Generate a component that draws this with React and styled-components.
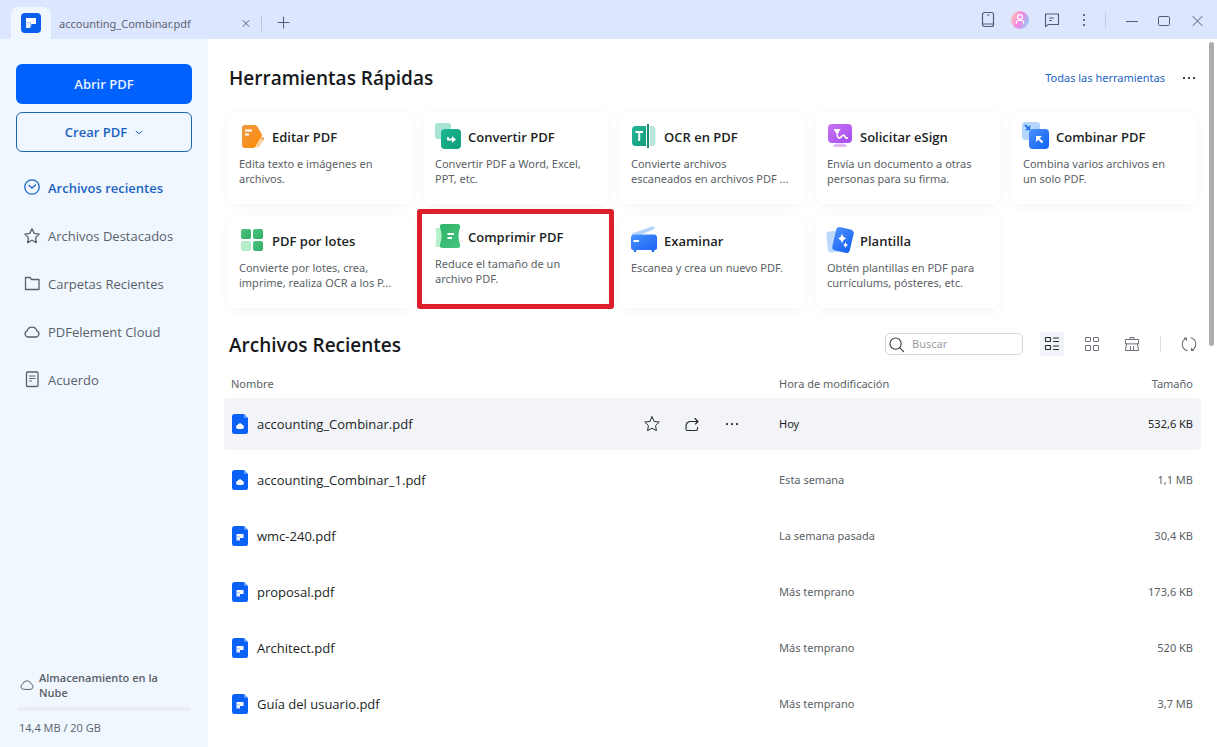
import styled, { createGlobalStyle, css } from 'styled-components';

const GlobalStyle = createGlobalStyle`
	* {
		box-sizing: border-box;
	}
	body {
		margin: 0;
		font-family: 'Noto Sans', 'Open Sans', sans-serif;
		font-size: 11px;
		color: #1c1f24;
		background-color: #fff;
	}
	h1, h2, h3, p, ul {
		margin: 0;
		padding: 0;
	}
	button {
		font-family: inherit;
		padding: 0;
		border: none;
		background: none;
		cursor: pointer;
	}
	svg {
		display: block;
		overflow: visible;
		flex: none;
	}
`;

const titleFont = "'Open Sans', 'Noto Sans', sans-serif";

const Page = styled.div`
	height: 100vh;
	display: flex;
	flex-direction: column;
	overflow: hidden;
`;

const TitleBar = styled.header`
	height: 39px;
	flex: none;
	display: flex;
	align-items: flex-end;
	padding: 0 3px 0 11px;
	background-color: #dce6fe;
`;

const HomeTab = styled.button`
	width: 40px;
	height: 32px;
	display: grid;
	place-items: center;
	background-color: #f0f7ff;
	border-radius: 8px 8px 0 0;
`;

const FileTab = styled.div`
	width: 210px;
	height: 32px;
	display: flex;
	align-items: center;
	justify-content: space-between;
	padding: 0 3px 0 8px;
	color: #5d6470;
`;

const IconButton = styled.button`
	width: ${({ $size }) => $size || '24px'};
	height: ${({ $height }) => $height || '24px'};
	display: grid;
	place-items: center;
	color: ${({ $color }) => $color || '#565d6b'};
	background-color: ${({ $active }) => ($active ? '#f1f3f8' : 'transparent')};
	border-radius: 4px;
`;

const TabDivider = styled.span`
	width: 1px;
	height: 16px;
	margin: 0 10px 8px 0;
	background-color: #bcc6dd;
`;

const WindowControls = styled.div`
	height: 39px;
	margin-left: auto;
	display: flex;
	align-items: center;
`;

const Divider = styled.span`
	width: 1px;
	height: 16px;
	background-color: ${({ $color }) => $color || '#d9dce2'};
	margin: ${({ $margin }) => $margin || '0'};
`;

const Body = styled.div`
	flex: 1;
	min-height: 0;
	display: flex;
`;

const Sidebar = styled.aside`
	width: 208px;
	flex: none;
	display: flex;
	flex-direction: column;
	padding: 25px 16px 11px;
	background-color: #f0f7ff;
	font-family: ${titleFont};
`;

const MainButton = styled.button`
	height: 40px;
	flex: none;
	margin-bottom: 8px;
	display: flex;
	align-items: center;
	justify-content: center;
	gap: 8px;
	border-radius: 6px;
	font-size: 13px;
	font-weight: 600;
	${({ $outline }) =>
		$outline
			? css`
					color: #1b63c2;
					border: 1px solid #2465b0;
			  `
			: css`
					color: #e8f1ff;
					background-color: #0061ff;
			  `}
`;

const Nav = styled.nav`
	display: flex;
	flex-direction: column;
	margin-top: 4px;
`;

const NavLink = styled.a`
	height: 48px;
	display: flex;
	align-items: center;
	gap: 8px;
	padding-left: 8px;
	font-size: 13px;
	font-weight: ${({ $active }) => ($active ? 600 : 400)};
	color: ${({ $active }) => ($active ? '#1b63c2' : '#5b616b')};
	text-decoration: none;
`;

const Storage = styled.div`
	margin-top: auto;
	color: #5b616b;
`;

const StorageTitle = styled.div`
	display: flex;
	align-items: center;
	gap: 5px;
	padding: 0 24px 0 4px;
	font-weight: 600;
	font-size: 11px;
	line-height: 15px;
`;

const StorageBar = styled.div`
	height: 4px;
	margin: 7px 1px 9px;
	border-radius: 2px;
	background-color: #ebedf0;
`;

const StorageText = styled.p`
	padding-left: 3px;
	font-size: 11px;
	line-height: 16px;
`;

const Main = styled.main`
	flex: 1;
	min-width: 0;
	position: relative;
	padding: 19px 16px 0;
	overflow: hidden;
`;

const ScrollThumb = styled.div`
	position: absolute;
	top: 3px;
	right: 3px;
	width: 5px;
	height: 43%;
	border-radius: 3px;
	background-color: #adadad;
`;

const SectionHeader = styled.div`
	height: ${({ $height }) => $height};
	margin-bottom: 14px;
	padding-left: 5px;
	display: flex;
	align-items: center;
	justify-content: space-between;
`;

const SectionTitle = styled.h2`
	padding-top: ${({ $drop }) => ($drop ? '2px' : '0')};
	font-family: ${titleFont};
	font-size: 19px;
	line-height: 24px;
	font-weight: 600;
	color: #16181c;
`;

const HeaderLinks = styled.div`
	display: flex;
	align-items: center;
	gap: 12px;
`;

const AllTools = styled.a`
	padding-bottom: 2px;
	color: #1b63c2;
	text-decoration: none;
`;

const ToolGrid = styled.div`
	display: grid;
	grid-template-columns: repeat(5, minmax(0, 1fr));
	gap: 12px;
	padding: 0 5px 0 4px;
	margin-bottom: 24px;
`;

const ToolCard = styled.article`
	position: relative;
	height: 92px;
	padding: 12px 8px 0 11px;
	border-radius: 8px;
	background-color: #fff;
	box-shadow: 0 2px 10px rgba(40, 100, 170, 0.07);
	${({ $raised }) =>
		$raised &&
		css`
			transform: translateY(-4px);
			&::after {
				content: '';
				position: absolute;
				inset: -3px -6px -5px -7px;
				border: 5px solid #dc1f2b;
				border-radius: 3px;
			}
		`}
`;

const ToolHead = styled.div`
	height: 24px;
	display: flex;
	align-items: center;
	gap: 8px;
	padding-left: 1px;
	margin-bottom: 8px;
`;

const ToolName = styled.h3`
	padding-top: 2px;
	font-family: ${titleFont};
	font-size: 13px;
	line-height: 24px;
	font-weight: 600;
	color: #1c1f24;
`;

const ToolText = styled.p`
	line-height: 15px;
	color: #5b5f66;
	white-space: pre;
`;

const ListTools = styled.div`
	display: flex;
	align-items: center;
	gap: 16px;
`;

const SearchBox = styled.label`
	width: 138px;
	height: 22px;
	margin-right: 1px;
	display: flex;
	align-items: center;
	gap: 8px;
	padding: 0 3px;
	border: 1px solid #d4d7dd;
	border-radius: 5px;
	color: #3a3d43;
`;

const SearchInput = styled.input`
	width: 100%;
	min-width: 0;
	padding: 0 0 2px;
	border: none;
	outline: none;
	background: none;
	font-family: inherit;
	font-size: 11px;
	&::placeholder {
		color: #9b9ea4;
	}
`;

const FileTable = styled.table`
	width: 100%;
	table-layout: fixed;
	border-collapse: separate;
	border-spacing: 0 4px;
`;

const HeadCell = styled.th`
	height: 20px;
	width: ${({ $width }) => $width || 'auto'};
	padding: 0 8px 0 ${({ $first }) => ($first ? '7px' : '8px')};
	text-align: ${({ $align }) => $align || 'left'};
	line-height: 20px;
	font-weight: 400;
	color: #5b5f66;
`;

const Cell = styled.td`
	height: 52px;
	padding: 0 8px 2px;
	text-align: ${({ $align }) => $align || 'left'};
	&:first-child {
		padding-bottom: 0;
		border-radius: 4px 0 0 4px;
	}
	&:last-child {
		border-radius: 0 4px 4px 0;
	}
`;

const FileRow = styled.tr`
	color: ${({ $active }) => ($active ? '#1c1f24' : '#5b5f66')};
	& > td {
		background-color: ${({ $active }) => ($active ? '#f2f4f8' : 'transparent')};
	}
`;

const FileName = styled.div`
	display: flex;
	align-items: center;
	gap: 9px;
	font-family: ${titleFont};
	font-size: 13px;
	color: #1c1f24;
`;

const RowActions = styled.div`
	display: flex;
	gap: 16px;
	margin: 0 19px 0 auto;
`;

const stroke = { fill: 'none', stroke: 'currentColor', strokeLinecap: 'round', strokeLinejoin: 'round' };

const Svg = ({ size = 16, width = 1.2, children }) => (
	<svg width={size} height={size} viewBox="0 0 16 16" {...stroke} strokeWidth={width} aria-hidden="true">
		{children}
	</svg>
);

const starPath = 'M8 .8l2.2 4.6 5 .7-3.6 3.5.8 5L8 12.2l-4.4 2.4.8-5L.8 6.100l5-.7z';
const cloudPath = 'M4 13a3.2 3.2 0 0 1-.8-6.200 5 5 0 0 1 9.600 0A3.200 3.200 0 0 1 12 13z';

const Dots = ({ vertical, r = 1 }) => (
	<svg width="16" height="16" viewBox="0 0 16 16" fill="currentColor" aria-hidden="true">
		{[3, 8, 13].map((p) => (
			<rect key={p} x={(vertical ? 8 : p) - r} y={(vertical ? p : 8) - r} width={r * 2} height={r * 2} rx=".4" />
		))}
	</svg>
);

const Gradient = ({ id, from, to }) => (
	<linearGradient id={id} x1="0" y1="0" x2="1" y2="1">
		<stop offset="0" stopColor={from} />
		<stop offset="1" stopColor={to} />
	</linearGradient>
);

const ToolIcon = ({ id, from, to, children }) => (
	<svg width="24" height="24" viewBox="0 0 24 24" aria-hidden="true">
		<defs>
			<Gradient id={id} from={from} to={to} />
		</defs>
		{children}
	</svg>
);

const tools = [
	{
		name: 'Editar PDF',
		text: 'Edita texto e imágenes en\narchivos.',
		icon: (
			<ToolIcon id="edit" from="#ee9a45" to="#ff8a00">
				<path d="M5 1h9.500q2 0 3 1.700l4 7q.7 1.300 0 2.600L16 22q-1 2-3 2H5q-3 0-3-3V4q0-3 3-3z" fill="url(#edit)" />
				<path d="M21.500 12.500l3 1.800-4.800 8.200-3.300 1.700.2-3.600z" fill="#fbd3a3" />
				<path d="M21.500 12.500l3 1.800-1.200 2-3-1.800z" fill="#f4a85a" />
				<path d="M5 6.500h7M5 10.500h4" stroke="#fff" strokeWidth="1.8" />
			</ToolIcon>
		),
	},
	{
		name: 'Convertir PDF',
		text: 'Convertir PDF a Word, Excel,\nPPT, etc.',
		icon: (
			<ToolIcon id="convert" from="#1fb893" to="#0c9c78">
				<rect x="-1" y="-1" width="16" height="16" rx="3" fill="#a6e3d2" />
				<rect x="5" y="5" width="20" height="20" rx="4" fill="url(#convert)" />
				<path d="M12 13v2.500h5" fill="none" stroke="#fff" strokeWidth="1.8" />
				<path d="M16 12l4 3.500-4 3.500z" fill="#fff" />
			</ToolIcon>
		),
	},
	{
		name: 'OCR en PDF',
		text: 'Convierte archivos\nescaneados en archivos PDF ...',
		icon: (
			<ToolIcon id="ocr" from="#27b797" to="#0f9d7c">
				<path d="M3.500 2H14v20H3.500Q0 22 0 18.500V5.500Q0 2 3.500 2z" fill="url(#ocr)" />
				<rect x="15" y="0" width="2" height="24" fill="#0f8f72" />
				<path d="M18 2h2q3.500 0 3.500 3.500v13Q23.500 22 20 22h-2z" fill="#b9e8db" />
				<path d="M3.500 8h7.500M7.200 8v9" stroke="#fff" strokeWidth="2" />
			</ToolIcon>
		),
	},
	{
		name: 'Solicitar eSign',
		text: 'Envía un documento a otras\npersonas para su firma.',
		icon: (
			<ToolIcon id="esign" from="#c473f3" to="#a64df0">
				<path d="M5 23q1-3.500 4-3.500h6q3 0 4 3.500z" fill="#dfbcf8" />
				<rect x="0" y="0" width="24" height="19" rx="4" fill="url(#esign)" />
				<path d="M5.500 5h7l-3.300 6z" fill="#fff" />
				<path d="M9 10.500c.5 3.500 2.500 4.500 4 2.500s3-2.500 3.800-.5 1.500 2 3.200 1.500" fill="none" stroke="#fff" strokeWidth="1.7" />
			</ToolIcon>
		),
	},
	{
		name: 'Combinar PDF',
		text: 'Combina varios archivos en\nun solo PDF.',
		icon: (
			<ToolIcon id="combine" from="#4c90fb" to="#1062f5">
				<rect x="-2" y="-2" width="18" height="18" rx="3" fill="#b5d6fd" />
				<path d="M1 1l3.500 3.500" stroke="#2670e8" strokeWidth="1.8" />
				<path d="M6.200 1v5.200H1z" fill="#2670e8" />
				<rect x="5" y="5" width="20" height="20" rx="4" fill="url(#combine)" />
				<path d="M18.500 18.500l-5-5" stroke="#fff" strokeWidth="2" />
				<path d="M12 18v-6h6z" fill="#fff" />
			</ToolIcon>
		),
	},
	{
		name: 'PDF por lotes',
		text: 'Convierte por lotes, crea,\nimprime, realiza OCR a los P...',
		icon: (
			<ToolIcon id="batch" from="#4fc380" to="#2fae66">
				<rect x="1" y="1" width="10" height="10" rx="2" fill="url(#batch)" />
				<rect x="13" y="1" width="10" height="10" rx="2" fill="url(#batch)" />
				<rect x="1" y="13" width="10" height="10" rx="2" fill="#b6edc9" />
				<rect x="13" y="13" width="10" height="10" rx="2" fill="url(#batch)" />
			</ToolIcon>
		),
	},
	{
		name: 'Comprimir PDF',
		text: 'Reduce el tamaño de un\narchivo PDF.',
		raised: true,
		icon: (
			<ToolIcon id="compress" from="#2fb56a" to="#45c37c">
				<path d="M5 4H1Q-1 4-.6 6q1.800 6 0 15-.4 2 1.600 2H6z" fill="#b6f0cc" />
				<path d="M7 0h14q4 0 3 3.500-3 8.500 0 17 1 3.500-3 3.500H7q-4 0-3-3.500 3-8.500 0-17Q3 0 7 0z" fill="url(#compress)" />
				<path d="M11.500 10h6.500M11.500 14h4.500" stroke="#fff" strokeWidth="1.8" />
			</ToolIcon>
		),
	},
	{
		name: 'Examinar',
		text: 'Escanea y crea un nuevo PDF.',
		icon: (
			<ToolIcon id="scan" from="#4a92fd" to="#1763f5">
				<path d="M0 6.500v-1L20-1.500q2-.8 2.500.5t-1 2.500L9 6.500z" fill="#b3d2fb" />
				<path d="M2 6.500h20q3 0 3 3V20q0 2-2 2h-.5l-.5 2h-2l-.5-2H4.500L4 24H2l-.5-2Q-1 22-1 20V9.500q0-3 3-3z" fill="url(#scan)" />
				<path d="M1.500 13h5.500" stroke="#fff" strokeWidth="2" />
			</ToolIcon>
		),
	},
	{
		name: 'Plantilla',
		text: 'Obtén plantillas en PDF para\ncurrículums, pósteres, etc.',
		icon: (
			<ToolIcon id="template" from="#4a8ffb" to="#1260f5">
				<rect x="-1" y="3" width="16" height="21" rx="3" fill="#bddafc" transform="rotate(-6 7 13)" />
				<rect x="6" y="0" width="18" height="24" rx="4" fill="url(#template)" transform="rotate(13 15 12)" />
				<path d="M14 5.500q.8 4 4.500 5-3.700 1-4.500 5-.8-4-4-5 3.200-1 4-5z" fill="#fff" />
				<path d="M17.500 14q.5 2.500 2.500 3-2 .5-2.500 3-.5-2.500-2.500-3 2-.5 2.500-3z" fill="#fff" />
			</ToolIcon>
		),
	},
];

const navItems = [
	{
		label: 'Archivos recientes',
		active: true,
		icon: (
			<>
				<circle cx="8" cy="7" r="7.2" />
				<path d="M5 5.500l3 2.500 3.500-3" />
			</>
		),
	},
	{ label: 'Archivos Destacados', icon: <path d={starPath} /> },
	{ label: 'Carpetas Recientes', icon: <path d="M1.500 1.500H6L7.500 3.500H15V13.500H1.500z" /> },
	{ label: 'PDFelement Cloud', icon: <path d={cloudPath} /> },
	{
		label: 'Acuerdo',
		icon: (
			<>
				<rect x="2.5" y="0" width="11.5" height="14.5" rx="1" />
				<path d="M5.500 4h5.500M5.500 6.500h5.500M5.500 9h2" strokeWidth="1" />
			</>
		),
	},
];

const files = [
	{ name: 'accounting_Combinar.pdf', date: 'Hoy', size: '532,6 KB', cloud: true, active: true },
	{ name: 'accounting_Combinar_1.pdf', date: 'Esta semana', size: '1,1 MB', cloud: true },
	{ name: 'wmc-240.pdf', date: 'La semana pasada', size: '30,4 KB' },
	{ name: 'proposal.pdf', date: 'Más temprano', size: '173,6 KB' },
	{ name: 'Architect.pdf', date: 'Más temprano', size: '520 KB' },
	{ name: 'Guía del usuario.pdf', date: 'Más temprano', size: '3,7 MB' },
];

const Logo = () => (
	<svg width="20" height="20" viewBox="0 0 20 20" aria-hidden="true">
		<rect width="20" height="20" rx="4" fill="#0a5fee" />
		<path d="M5 5h10v6H9.500V9.500H5z" fill="#fff" />
		<path d="M5 9.500h4.500V15H5z" fill="#e3edff" />
		<path d="M9.500 11.500h1V13h-1z" fill="#e3edff" />
	</svg>
);

const FileIcon = ({ cloud }) => (
	<svg width="16" height="20" viewBox="0 0 16 20" aria-hidden="true">
		<path d="M2.500 0H12l4 4v13.500q0 2.500-2.500 2.500h-11Q0 20 0 17.500v-15Q0 0 2.500 0z" fill="#0b60f6" />
		<path d="M12 0l4 4h-2.500Q12 4 12 2.500z" fill="#6ba2fb" />
		{cloud ? (
			<path d="M5.800 15a2.100 2.100 0 0 1-.3-4.100 2.700 2.700 0 0 1 5 0 2.100 2.100 0 0 1-.3 4.100z" fill="#fff" />
		) : (
			<>
				<path d="M4.500 8h7v4H8v-1.500H4.500z" fill="#fff" />
				<path d="M4.500 10.500H8V14.500H4.500z" fill="#e3edff" />
			</>
		)}
	</svg>
);

const Avatar = () => (
	<svg width="18" height="18" viewBox="0 0 18 18" aria-hidden="true">
		<defs>
			<linearGradient id="avatar" x1="0" y1="0.3" x2="1" y2="0.7">
				<stop offset="0" stopColor="#f9c2b4" />
				<stop offset="0.5" stopColor="#f284e6" />
				<stop offset="1" stopColor="#93cdf8" />
			</linearGradient>
		</defs>
		<circle cx="9" cy="9" r="9" fill="url(#avatar)" />
		<g fill="none" stroke="#fff" strokeWidth="1.2" strokeLinecap="round">
			<circle cx="9" cy="6" r="2.4" />
			<path d="M5.300 12.500V12q0-2.500 2.500-2.500h2.400q2.500 0 2.500 2.500v.5" />
		</g>
	</svg>
);

const Tool = ({ name, text, icon, raised }) => (
	<ToolCard $raised={raised}>
		<ToolHead>
			{icon}
			<ToolName>{name}</ToolName>
		</ToolHead>
		<ToolText>{text}</ToolText>
	</ToolCard>
);

const App = () => (
	<Page>
		<GlobalStyle />
		<TitleBar>
			<HomeTab aria-label="Inicio">
				<Logo />
			</HomeTab>
			<FileTab>
				accounting_Combinar.pdf
				<IconButton aria-label="Cerrar pestaña">
					<Svg size={14} width={1.1}>
						<path d="M4.500 5l7 7M11.500 5l-7 7" />
					</Svg>
				</IconButton>
			</FileTab>
			<TabDivider />
			<IconButton aria-label="Nueva pestaña" $height="34px">
				<Svg width={1}>
					<path d="M7.500 3v11M2 8.500h11" />
				</Svg>
			</IconButton>
			<WindowControls>
				<IconButton $size="32px" aria-label="Móvil">
					<Svg>
						<rect x="2.5" y="0.5" width="11" height="14" rx="2" />
						<path d="M2.500 12h11M7.500 3h1.500" />
					</Svg>
				</IconButton>
				<IconButton $size="32px" aria-label="Cuenta">
					<Avatar />
				</IconButton>
				<IconButton $size="32px" aria-label="Comentarios">
					<Svg width={1.1}>
						<path d="M1.500 2h13v10.500H4.500l-3 2zM5.500 6h4M5.500 8.500h2" />
					</Svg>
				</IconButton>
				<IconButton $size="32px" aria-label="Menú">
					<Dots vertical />
				</IconButton>
				<Divider $color="#c3c8d6" $margin="0 10px 0 5px" />
				<IconButton $size="32px" aria-label="Minimizar">
					<Svg width={1}>
						<path d="M2.500 9.500h11" />
					</Svg>
				</IconButton>
				<IconButton $size="32px" aria-label="Maximizar">
					<Svg width={1}>
						<rect x="2.5" y="4.5" width="11" height="9" rx="1" />
					</Svg>
				</IconButton>
				<IconButton $size="34px" aria-label="Cerrar">
					<Svg width={1}>
						<path d="M4 4.500l9 9M13 4.500l-9 9" />
					</Svg>
				</IconButton>
			</WindowControls>
		</TitleBar>
		<Body>
			<Sidebar>
				<MainButton>Abrir PDF</MainButton>
				<MainButton $outline>
					Crear PDF
					<Svg size={8} width={2}>
						<path d="M2 6.500l6 5 6-5" />
					</Svg>
				</MainButton>
				<Nav>
					{navItems.map(({ label, active, icon }) => (
						<NavLink key={label} href="#" $active={active}>
							<Svg width={1.3}>{icon}</Svg>
							{label}
						</NavLink>
					))}
				</Nav>
				<Storage>
					<StorageTitle>
						<Svg size={14} width={1.1}>
							<path d={cloudPath} />
						</Svg>
						Almacenamiento en la Nube
					</StorageTitle>
					<StorageBar />
					<StorageText>14,4 MB / 20 GB</StorageText>
				</Storage>
			</Sidebar>
			<Main>
				<SectionHeader $height="40px">
					<SectionTitle>Herramientas Rápidas</SectionTitle>
					<HeaderLinks>
						<AllTools href="#">Todas las herramientas</AllTools>
						<IconButton aria-label="Más" $color="#25282e">
							<Dots />
						</IconButton>
					</HeaderLinks>
				</SectionHeader>
				<ToolGrid>
					{tools.map((tool) => (
						<Tool key={tool.name} {...tool} />
					))}
				</ToolGrid>
				<SectionHeader $height="24px">
					<SectionTitle $drop>Archivos Recientes</SectionTitle>
					<ListTools>
						<SearchBox>
							<Svg size={15} width={1.2}>
								<circle cx="7" cy="7" r="6" />
								<path d="M11.500 11.500l4 4" />
							</Svg>
							<SearchInput type="text" placeholder="Buscar" aria-label="Buscar" />
						</SearchBox>
						<IconButton $active $color="#25282e" aria-label="Vista de lista">
							<Svg width={1.1}>
								<rect x="1.5" y="1.5" width="5" height="4" rx=".5" />
								<rect x="1.5" y="9.5" width="5" height="4" rx=".5" />
								<path d="M9.500 2h5M9.500 5.500h5M9.500 10h5M9.500 13.500h5" />
							</Svg>
						</IconButton>
						<IconButton $color="#6c7079" aria-label="Vista de cuadrícula">
							<Svg width={1}>
								<rect x="1.5" y="1.5" width="5" height="4" rx=".5" />
								<rect x="9.5" y="1.5" width="5" height="4" rx=".5" />
								<rect x="1.5" y="9.5" width="5" height="5" rx=".5" />
								<rect x="9.5" y="9.5" width="5" height="5" rx=".5" />
							</Svg>
						</IconButton>
						<IconButton $color="#6c7079" aria-label="Limpiar lista">
							<Svg width={1}>
								<path d="M6 3.500V1.500h4v2M1.500 7.500v-4h13v4zM2.500 7.500l-1 7h13l-1-7M6.500 14.500v-4M9.500 14.500v-4" />
							</Svg>
						</IconButton>
						<Divider />
						<IconButton $color="#6c7079" aria-label="Actualizar">
							<Svg width={1.1}>
								<path d="M5.300 2.200a6.600 6.600 0 0 0 .7 12.400M10.700 14.200a6.600 6.600 0 0 0-.7-12.400M3.500 2h2v2M12.500 14.400h-2v-2" />
							</Svg>
						</IconButton>
					</ListTools>
				</SectionHeader>
				<FileTable>
					<thead>
						<tr>
							<HeadCell $first>Nombre</HeadCell>
							<HeadCell $width="310px">Hora de modificación</HeadCell>
							<HeadCell $width="120px" $align="right">
								Tamaño
							</HeadCell>
						</tr>
					</thead>
					<tbody>
						{files.map(({ name, date, size, cloud, active }) => (
							<FileRow key={name} $active={active}>
								<Cell>
									<FileName>
										<FileIcon cloud={cloud} />
										{name}
										{active && (
											<RowActions>
												<IconButton $color="#25282e" aria-label="Destacar">
													<Svg width={1}>
														<path d={starPath} />
													</Svg>
												</IconButton>
												<IconButton $color="#25282e" aria-label="Compartir">
													<Svg width={1.1}>
														<path d="M13.500 11.500v1.500q0 1.500-1.500 1.500H3.500Q2 14.500 2 13V10.500q0-5 5-5h7M11 2.500l3 3-2.500 2.500" />
													</Svg>
												</IconButton>
												<IconButton $color="#25282e" aria-label="Más">
													<Dots />
												</IconButton>
											</RowActions>
										)}
									</FileName>
								</Cell>
								<Cell>{date}</Cell>
								<Cell $align="right">{size}</Cell>
							</FileRow>
						))}
					</tbody>
				</FileTable>
				<ScrollThumb />
			</Main>
		</Body>
	</Page>
);

export default App;
